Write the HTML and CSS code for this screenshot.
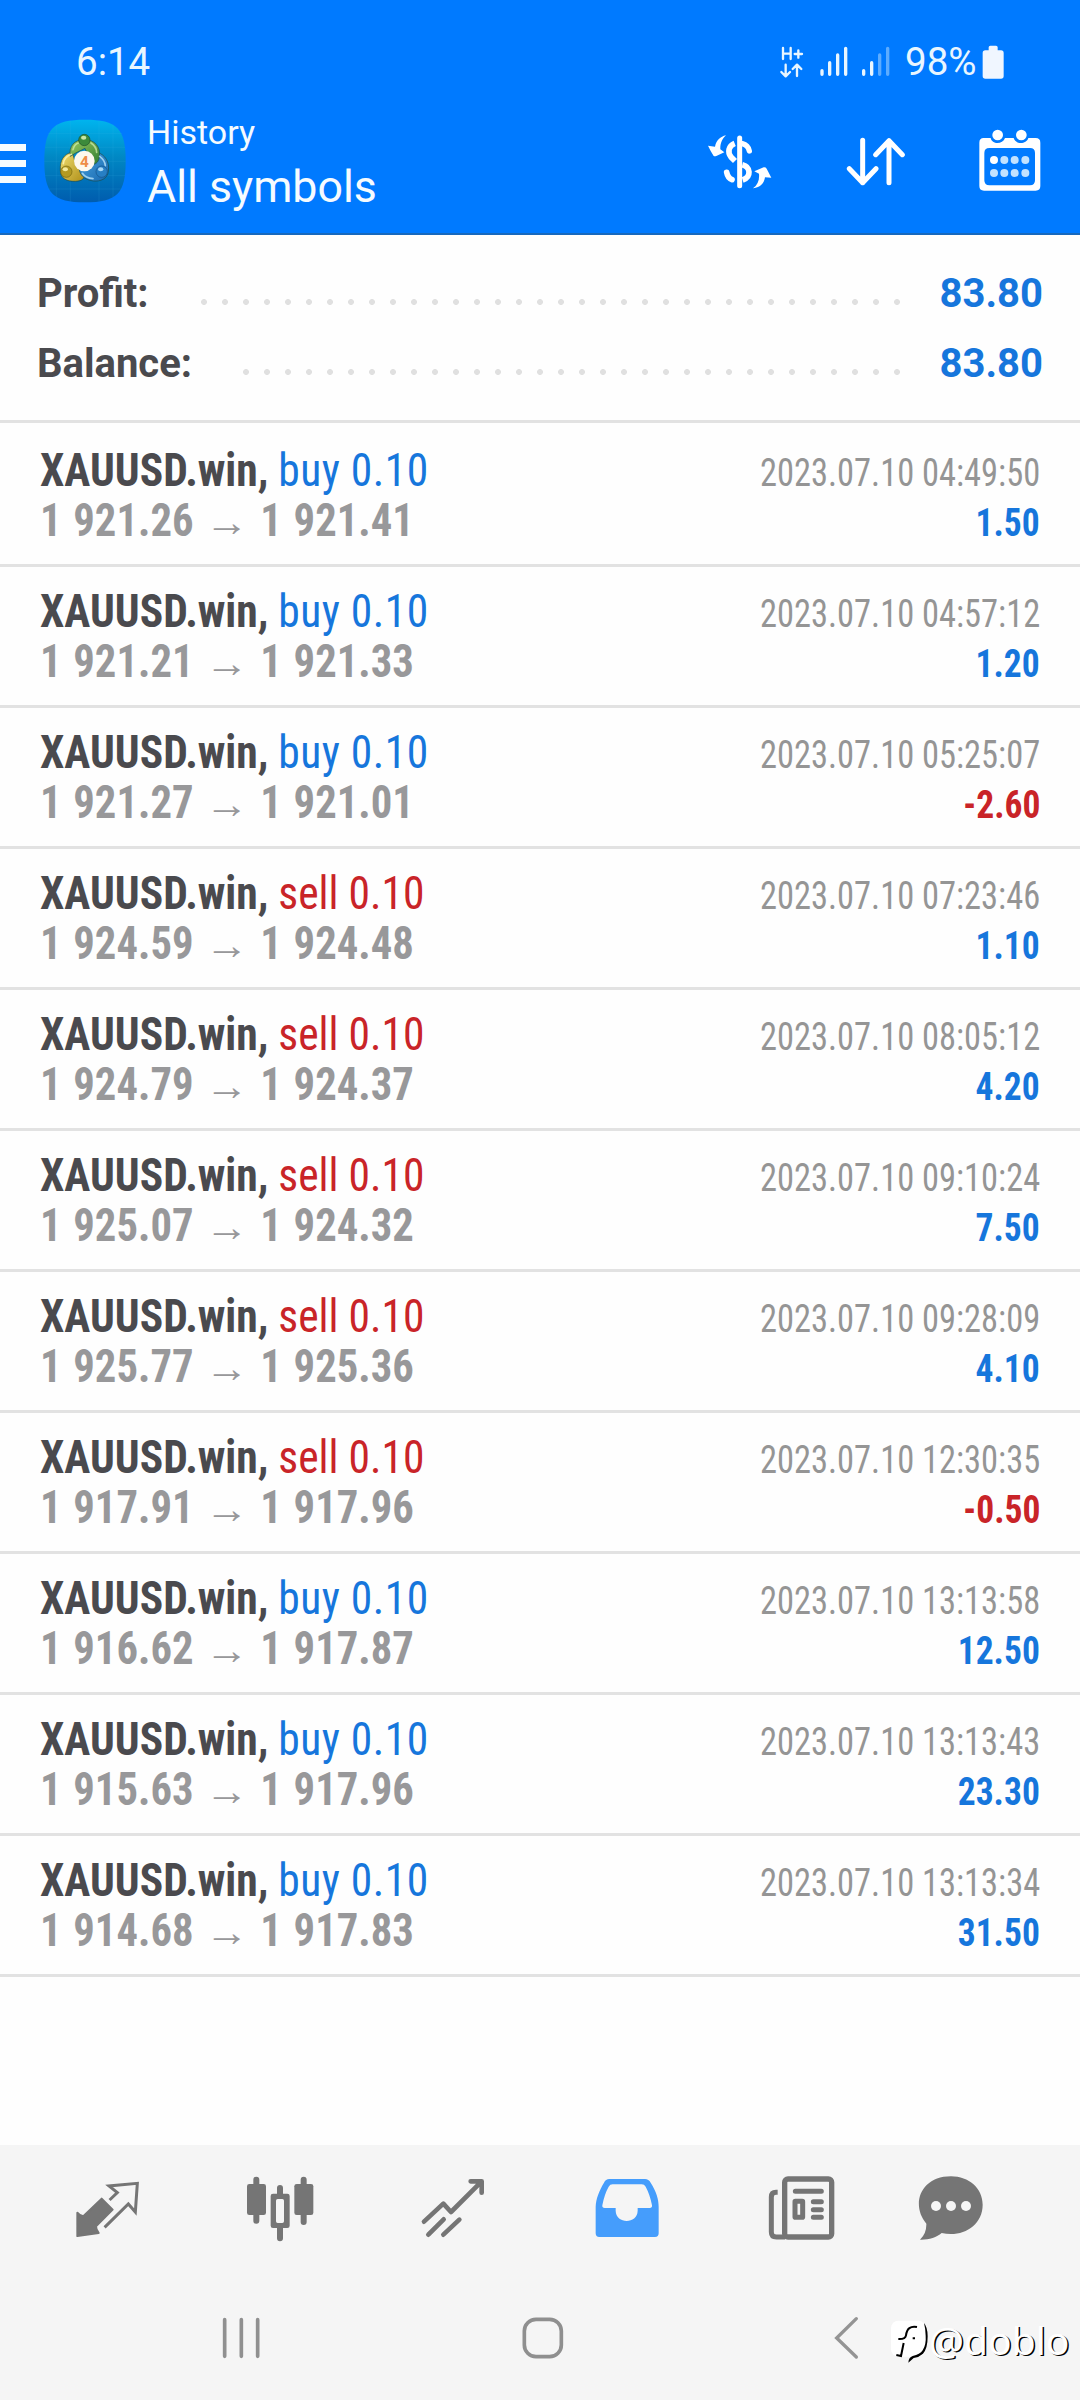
FILE: index.html
```html
<!DOCTYPE html>
<html lang="en">
<head>
<meta charset="utf-8">
<title>History</title>
<link rel="stylesheet" href="styles.css">
</head>
<body>
<header class="header">
  <div class="status">
    <span class="clock">6:14</span>
    <svg class="signals" width="120" height="40" viewBox="295 130 360 120" fill="none" stroke="#e9f6ff" stroke-linecap="round" stroke-linejoin="round">
      <path stroke-width="7" d="M310 145V178M333 145V178M310 162H333M345 163H367M356 152V174"/>
      <path stroke-width="7" d="M318 195V229M305 217L318 230L331 217M352 229V196M339 208L352 195L365 208"/>
      <path stroke-width="10" d="M427 213V224M450 189V224M474 166V224M498 146V224M552 213V224M576 189V224"/>
      <path stroke-width="10" stroke="#5dacff" d="M600 166V224M624 146V224"/>
    </svg>
    <span class="percent">98%</span>
    <svg class="battery" width="22" height="34" viewBox="907 133 66 102"><path fill="#f0f6ff" d="M927 140q0-5 5-5h17q5 0 5 5v9h10q8 0 8 8v69q0 8-8 8h-47q-8 0-8-8v-69q0-8 8-8h10z"/></svg>
  </div>
  <div class="toolbar">
    <div class="menu"><i></i><i></i><i></i></div>
    <svg class="logo" width="84" height="84" viewBox="128 358 252 252">
      <defs>
        <linearGradient id="sky" x1="0" y1="0" x2="0" y2="1"><stop offset="0" stop-color="#00b4ee"/><stop offset=".45" stop-color="#0088c4"/><stop offset="1" stop-color="#005cae"/></linearGradient>
        <linearGradient id="green" x1="0" y1="0" x2="1" y2="1"><stop offset="0" stop-color="#9ccb62"/><stop offset="1" stop-color="#2f7d31"/></linearGradient>
        <linearGradient id="gold" x1="0" y1="0" x2="1" y2="1"><stop offset="0" stop-color="#f1e071"/><stop offset="1" stop-color="#ae8d17"/></linearGradient>
        <linearGradient id="blue" x1="0" y1="0" x2="1" y2="1"><stop offset="0" stop-color="#4ba4df"/><stop offset="1" stop-color="#1768b0"/></linearGradient>
      </defs>
      <path fill="url(#sky)" d="M254 360C350 360 376 386 376 484S350 608 254 608S132 582 132 484S158 360 254 360Z"/>
      <path stroke="#45b6e4" stroke-opacity=".2" stroke-width="2" fill="none" d="M168 376V592M210 362V606M296 362V606M338 376V592M142 402H366M134 443H374M132 485H376M134 528H374M144 568H364"/>
      <g stroke="#1d4c4a" stroke-width="2">
        <path fill="url(#gold)" d="M216 457C190 463 178 482 180 512C180 537 200 546 226 545C246 544 255 537 254 515L226 494Z"/>
        <path fill="url(#blue)" d="M290 457C316 466 328 488 324 514C322 538 300 546 279 544C250 540 238 524 237 508L278 492Z"/>
        <path fill="url(#green)" d="M210 470C204 440 222 420 252 419C283 420 302 442 297 470C296 485 288 494 276 495L254 446L226 460Z"/>
      </g>
      <path fill="none" stroke="#fff8b8" stroke-width="5" stroke-linecap="round" stroke-opacity=".8" d="M213 464Q191 472 189 492"/>
      <path fill="none" stroke="#b9e3fa" stroke-width="5" stroke-linecap="round" stroke-opacity=".8" d="M298 470Q314 482 315 498M246 521Q256 536 278 537"/>
      <path fill="none" stroke="#d9f0b0" stroke-width="5" stroke-linecap="round" stroke-opacity=".7" d="M218 450Q222 434 234 430M272 430Q288 440 289 458"/>
      <circle cx="252" cy="421" r="17" fill="#3c8a3b" stroke="#1d5129" stroke-width="2"/><ellipse cx="250" cy="414" rx="8" ry="6" fill="#cbe6a5"/>
      <circle cx="198" cy="516" r="17" fill="#b39a22" stroke="#75650f" stroke-width="2"/><ellipse cx="195" cy="509" rx="8" ry="6" fill="#f3e99c"/>
      <circle cx="304" cy="516" r="17" fill="#277fc4" stroke="#155187" stroke-width="2"/><ellipse cx="301" cy="509" rx="8" ry="6" fill="#a8d8f5"/>
      <circle cx="252" cy="484" r="31" fill="#fdf8ee"/>
      <text class="logo-digit" x="252" y="501" text-anchor="middle">4</text>
    </svg>
    <div class="titles"><span class="subtitle">History</span><span class="title">All symbols</span></div>
    <svg class="currency" width="70" height="60" viewBox="75 395 210 180">
      <g fill="none" stroke="#fff">
        <path stroke-width="15" stroke-linecap="round" d="M179 413V556"/>
        <path stroke-width="16" stroke-linecap="round" d="M187 430Q204 434 208 452"/>
        <path stroke-width="17" d="M164 429C145 437 142 456 153 470L165 482"/>
        <path stroke-width="17" d="M187 493C212 499 215 530 188 539"/>
        <path stroke-width="17" stroke-linecap="round" d="M140 516Q143 533 156 538"/>
      </g>
      <path fill="#fff" d="M138 405C121 409 109 419 105 439L84 436Q91 451 101 467Q104 469 109 467L133 456L121 447C120 430 127 414 138 405ZM219 564C236 562 252 553 255 531L274 532L260 505Q257 500 251 501L223 513L237 520C239 539 233 554 219 564Z"/>
    </svg>
    <svg class="sort" width="60" height="52" viewBox="497 407 180 156" fill="none" stroke="#fff" stroke-width="15" stroke-linecap="round" stroke-linejoin="round"><path d="M547 420V547M507 505L547 547L587 505M626 547V421M586 463L626 421L666 463"/></svg>
    <svg class="calendar" width="62" height="62" viewBox="899 387 186 186">
      <path fill="#fff" fill-rule="evenodd" d="M913 414H934C938 434 970 434 977 414H1003C1008 434 1041 434 1047 414H1069Q1083 414 1083 428V558Q1083 572 1069 572H914Q900 572 900 558V428Q900 414 913 414ZM930 444Q915 444 915 459V541Q915 556 930 556H1052Q1067 556 1067 541V459Q1067 444 1052 444Z"/>
      <circle cx="955" cy="405" r="16" fill="#fff"/><circle cx="1026" cy="405" r="16" fill="#fff"/>
      <circle cx="944" cy="480" r="12" fill="#fff"/>
      <g fill="#c2e2ff"><circle cx="975" cy="480" r="12"/><circle cx="1006" cy="480" r="12"/><circle cx="1038" cy="480" r="12"/><circle cx="944" cy="519" r="12"/><circle cx="975" cy="519" r="12"/><circle cx="1006" cy="519" r="12"/><circle cx="1038" cy="519" r="12"/></g>
    </svg>
  </div>
</header>
<section class="summary">
  <div class="sum-row"><b class="sum-label">Profit:</b><i class="dots dots-profit"></i><b class="sum-value">83.80</b></div>
  <div class="sum-row"><b class="sum-label">Balance:</b><i class="dots dots-balance"></i><b class="sum-value">83.80</b></div>
</section>
<main class="deals">
  <article class="deal"><div class="line"><span class="sym"><b>XAUUSD.win,</b> <span class="buy">buy 0.10</span></span><time>2023.07.10 04:49:50</time></div><div class="line"><b class="price"><span>1 921.26</span><span class="arrow">→</span><span>1 921.41</span></b><b class="result buy">1.50</b></div></article>
  <article class="deal"><div class="line"><span class="sym"><b>XAUUSD.win,</b> <span class="buy">buy 0.10</span></span><time>2023.07.10 04:57:12</time></div><div class="line"><b class="price"><span>1 921.21</span><span class="arrow">→</span><span>1 921.33</span></b><b class="result buy">1.20</b></div></article>
  <article class="deal"><div class="line"><span class="sym"><b>XAUUSD.win,</b> <span class="buy">buy 0.10</span></span><time>2023.07.10 05:25:07</time></div><div class="line"><b class="price"><span>1 921.27</span><span class="arrow">→</span><span>1 921.01</span></b><b class="result sell">-2.60</b></div></article>
  <article class="deal"><div class="line"><span class="sym"><b>XAUUSD.win,</b> <span class="sell">sell 0.10</span></span><time>2023.07.10 07:23:46</time></div><div class="line"><b class="price"><span>1 924.59</span><span class="arrow">→</span><span>1 924.48</span></b><b class="result buy">1.10</b></div></article>
  <article class="deal"><div class="line"><span class="sym"><b>XAUUSD.win,</b> <span class="sell">sell 0.10</span></span><time>2023.07.10 08:05:12</time></div><div class="line"><b class="price"><span>1 924.79</span><span class="arrow">→</span><span>1 924.37</span></b><b class="result buy">4.20</b></div></article>
  <article class="deal"><div class="line"><span class="sym"><b>XAUUSD.win,</b> <span class="sell">sell 0.10</span></span><time>2023.07.10 09:10:24</time></div><div class="line"><b class="price"><span>1 925.07</span><span class="arrow">→</span><span>1 924.32</span></b><b class="result buy">7.50</b></div></article>
  <article class="deal"><div class="line"><span class="sym"><b>XAUUSD.win,</b> <span class="sell">sell 0.10</span></span><time>2023.07.10 09:28:09</time></div><div class="line"><b class="price"><span>1 925.77</span><span class="arrow">→</span><span>1 925.36</span></b><b class="result buy">4.10</b></div></article>
  <article class="deal"><div class="line"><span class="sym"><b>XAUUSD.win,</b> <span class="sell">sell 0.10</span></span><time>2023.07.10 12:30:35</time></div><div class="line"><b class="price"><span>1 917.91</span><span class="arrow">→</span><span>1 917.96</span></b><b class="result sell">-0.50</b></div></article>
  <article class="deal"><div class="line"><span class="sym"><b>XAUUSD.win,</b> <span class="buy">buy 0.10</span></span><time>2023.07.10 13:13:58</time></div><div class="line"><b class="price"><span>1 916.62</span><span class="arrow">→</span><span>1 917.87</span></b><b class="result buy">12.50</b></div></article>
  <article class="deal"><div class="line"><span class="sym"><b>XAUUSD.win,</b> <span class="buy">buy 0.10</span></span><time>2023.07.10 13:13:43</time></div><div class="line"><b class="price"><span>1 915.63</span><span class="arrow">→</span><span>1 917.96</span></b><b class="result buy">23.30</b></div></article>
  <article class="deal"><div class="line"><span class="sym"><b>XAUUSD.win,</b> <span class="buy">buy 0.10</span></span><time>2023.07.10 13:13:34</time></div><div class="line"><b class="price"><span>1 914.68</span><span class="arrow">→</span><span>1 917.83</span></b><b class="result buy">31.50</b></div></article>
</main>
<footer class="footer">
  <nav class="tabs">
    <svg width="80" height="80" viewBox="204 120 240 240">
      <path fill="#757575" stroke="#757575" stroke-width="6" stroke-linejoin="round" d="M305 206L338 239L288 289Q288 300 296 309L232 318V248Q240 258 250 259Z"/>
      <path fill="none" stroke="#757575" stroke-width="9" stroke-linecap="square" d="M332 207L352 188L327 168L412 160L406 246L385 222L317 289"/>
    </svg>
    <svg width="80" height="80" viewBox="720 120 240 240" fill="#757575">
      <path stroke="#757575" stroke-width="18" stroke-linecap="round" d="M769 149V272M911 149V276M840 174V200M840 290V325"/>
      <rect x="741" y="162" width="57" height="93" rx="7"/><rect x="883" y="162" width="57" height="93" rx="7"/>
      <path fill="#f5f5f5" d="M828 207h24v72h-24z"/>
      <path fill-rule="evenodd" d="M819 191h43q7 0 7 7v89q0 7-7 7h-43q-7 0-7-7v-89q0-7 7-7zM833 207q-5 0-5 5v62q0 5 5 5h14q5 0 5-5v-62q0-5-5-5z"/>
    </svg>
    <svg width="80" height="80" viewBox="160 120 240 240" fill="none" stroke="#757575" stroke-width="14" stroke-linecap="round" stroke-linejoin="round"><path d="M193 275L251 221L274 246L363 157M333 154H366V188M206 314L252 268M251 314L299 269"/></svg>
    <svg width="80" height="80" viewBox="681 120 240 240"><path fill="#459dfc" fill-rule="evenodd" d="M748 147H855Q866 147 872 158C889 185 896 207 896 230V310Q896 321 885 321H718Q707 321 707 310V230C708 206 717 183 732 158Q737 147 748 147ZM758 163Q750 163 746 170Q733 193 727 226Q726 234 734 234H767V242C768 283 832 283 833 242V234H869Q877 234 876 226Q870 194 857 170Q853 163 845 163Z"/></svg>
    <svg width="80" height="80" viewBox="126 120 240 240" fill="none" stroke="#757575" stroke-linecap="round" stroke-linejoin="round">
      <rect x="194" y="147" width="141" height="174" rx="10" stroke-width="16"/><path stroke-width="15" stroke-linecap="butt" d="M173 187H168Q154 187 154 201V306Q154 321 169 321H195"/>
      <path stroke-width="15" d="M226 184H304M280 215H304M280 239H304M280 262H304"/><rect x="225" y="214" width="23" height="48" rx="1" stroke-width="15"/>
    </svg>
    <svg width="80" height="80" viewBox="573 120 240 240"><path fill="#757575" d="M693 139C747 139 788 175 788 224C788 278 743 312 693 312Q678 312 665 309C650 322 625 330 600 329Q620 311 619 281C572 226 600 139 693 139Z"/><g fill="#f5f5f5"><circle cx="648" cy="228" r="15"/><circle cx="693" cy="228" r="15"/><circle cx="738" cy="228" r="15"/></g></svg>
  </nav>
  <nav class="system">
    <svg class="recents" width="40" height="44" viewBox="662 558 120 132" stroke="#909090" stroke-width="11" stroke-linecap="round"><path d="M673 569V679M723 569V679M772 569V679"/></svg>
    <svg class="home" width="44" height="44" viewBox="483 558 132 132" fill="none" stroke="#8f8f8f" stroke-width="11"><rect x="493" y="568" width="111" height="112" rx="35"/></svg>
    <svg class="back" width="28" height="44" viewBox="338 558 84 132" fill="none" stroke="#949494" stroke-width="10" stroke-linecap="round"><path d="M408 566L349 624L408 681"/></svg>
  </nav>
</footer>
<div class="watermark">
  <svg width="44" height="46" viewBox="508 573 132 138">
    <rect x="514" y="578" width="104" height="108" rx="22" fill="#fff"/>
    <path fill="none" stroke="#000" stroke-width="6" d="M592 597Q563 591 559 622Q557 634 536 633M552 645L544 684L530 681M579 631H586"/>
    <path fill="#000" d="M613 585Q624 598 624 625Q624 662 610 677Q599 687 582 690L566 704Q567 688 579 684Q601 680 609 667Q620 649 618 623Q618 604 613 585Z"/>
  </svg><span>@doblo</span>
</div>
</body>
</html>
```

FILE: styles.css
```css
* { box-sizing: border-box; }
body { margin: 0; width: 1080px; height: 2400px; display: flex; flex-direction: column; position: relative; overflow: hidden; background: #fefefe; color: #4a4a4e; font-family: Roboto, sans-serif; }
svg { display: block; flex: none; }
i { font-style: normal; }
.header { height: 235px; background: #007aff; color: #f5fbff; border-bottom: 2px solid #1769bd; }
.status { height: 112px; display: flex; align-items: flex-start; padding: 38px 0 0 76px; font-size: 38.5px; line-height: 48px; color: #e9f6ff; }
.clock { width: 702px; }
.signals { margin-top: 5px; }
.percent { margin-left: 7px; width: 77px; }
.battery { margin-top: 7px; }
.toolbar { height: 121px; display: flex; align-items: flex-start; }
.menu { width: 26px; margin-top: 32px; display: grid; gap: 9px; }
.menu i { height: 7px; background: #f5fbff; }
.logo { margin: 7px 0 0 17px; }
.logo-digit { font: 700 46px Roboto, sans-serif; fill: #ee8d48; }
.titles { width: 560px; padding-left: 20px; display: flex; flex-direction: column; white-space: nowrap; }
.subtitle { font-size: 34px; line-height: 40px; }
.title { font-size: 44.7px; line-height: 52px; margin-top: 9px; }
.currency { margin: 20px 0 0 18px; }
.sort { margin: 24px 0 0 71px; }
.calendar { margin: 17px 0 0 73px; }
.summary { height: 188px; padding: 24px 37px 0 37px; border-bottom: 3px solid #e2e2e2; }
.sum-row { height: 70px; display: flex; justify-content: space-between; font-size: 40px; line-height: 70px; }
.sum-value { color: #1676dc; }
.dots { height: 6px; margin: 40px 40px 0 auto; background: radial-gradient(circle at 3px 3px, #e0e0e0 2.6px, transparent 3.3px) 0 0 / 21px 6px; }
.dots-profit { width: 699px; }
.dots-balance { width: 657px; }
.deals { padding-top: 3px; }
.deal { height: 141px; padding: 19px 40px 0; border-bottom: 3px solid #e2e2e2; font-family: "Roboto Condensed", Roboto, sans-serif; font-stretch: 75%; font-size: 46px; }
.line { height: 50px; line-height: 50px; display: flex; justify-content: space-between; align-items: baseline; white-space: nowrap; }
.buy { color: #1676dc; }
.sell { color: #c92428; }
.sym { transform: scaleX(.946); transform-origin: left; }
.sym .buy { letter-spacing: .5px; }
time { font-size: 38px; color: #959595; transform: scaleX(.906); transform-origin: right; }
.price { display: flex; color: #98989a; align-items: baseline; transform: scaleX(.928); transform-origin: left; word-spacing: 2px; }
.arrow { width: 72px; text-align: center; font-size: 40px; font-weight: 400; line-height: 1px; transform: scaleX(1.18); }
.result { font-size: 38px; transform: scaleX(.935); transform-origin: right; }
.footer { margin-top: auto; height: 255px; background: #f5f5f5; }
.tabs { height: 130px; padding: 25px 0 0 68px; display: grid; grid-template-columns: 172px 173px 174px 175px 149px 80px; }
.system { display: flex; padding-top: 41px; }
.recents { margin-left: 221px; }
.home { margin-left: 260px; }
.back { margin-left: 268px; }
.watermark { position: absolute; left: 889px; top: 2319px; display: flex; font: 39px/42px "Noto Sans", sans-serif; color: #fff; text-shadow: 1.5px 1px 0 #000; }
.watermark span { margin-left: -4px; }
```
